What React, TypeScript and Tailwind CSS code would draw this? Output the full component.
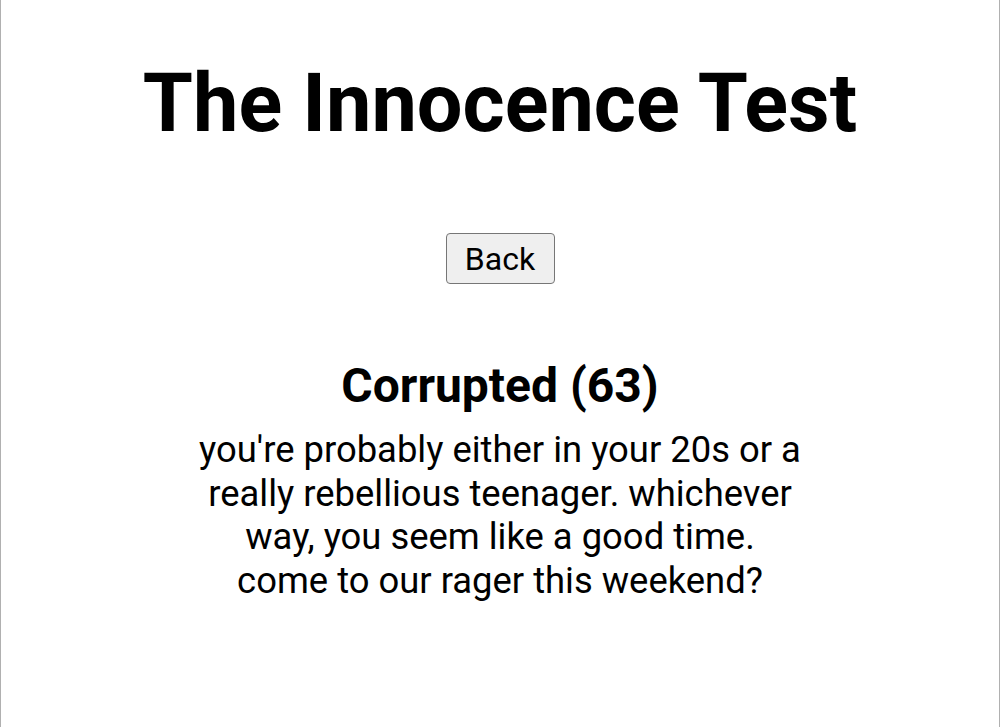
import React from "react";

export default function App() {
  return (
    <div
      className="min-h-[727px] w-[1000px] border-x border-[#b0b0b0] bg-white text-black flex flex-col items-center"
      style={{ fontFamily: "Roboto, 'Liberation Sans', sans-serif" }}
    >
      <h1 className="mt-[52px] text-[81px] font-bold leading-[104px]">The Innocence Test</h1>
      <button className="mt-[77px] h-[51px] w-[109px] rounded-[4px] border-[1.5px] border-[#767676] bg-[#efefef] text-[32px] leading-none">
        Back
      </button>
      <h2 className="mt-[74px] text-[48px] font-bold leading-[56px]">Corrupted (63)</h2>
      <p className="mt-[14px] w-[700px] text-center text-[36.4px] leading-[43.5px]">
        you're probably either in your 20s or a<br />
        really rebellious teenager. whichever<br />
        way, you seem like a good time.<br />
        come to our rager this weekend?
      </p>
    </div>
  );
}
